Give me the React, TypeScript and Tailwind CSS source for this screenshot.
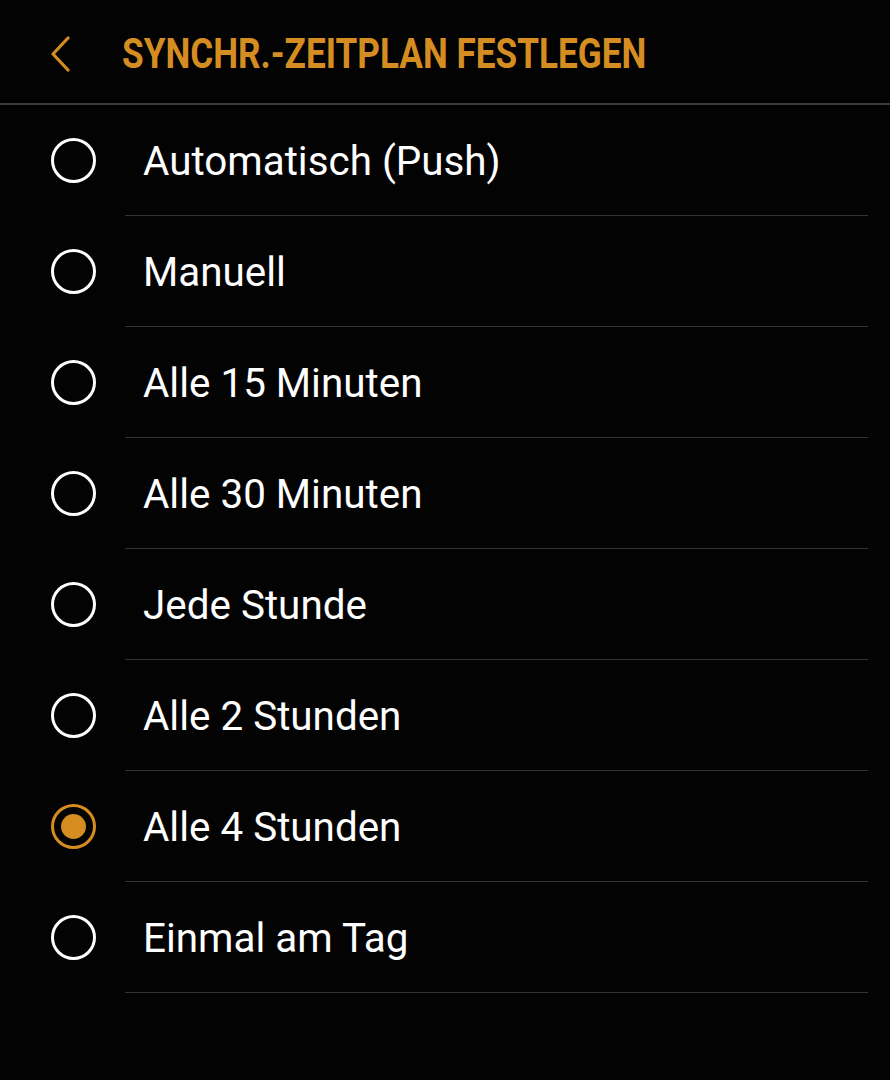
import React, { useState } from "react";

const options = [
  "Automatisch (Push)",
  "Manuell",
  "Alle 15 Minuten",
  "Alle 30 Minuten",
  "Jede Stunde",
  "Alle 2 Stunden",
  "Alle 4 Stunden",
  "Einmal am Tag",
];

const Radio: React.FC<{ checked: boolean }> = ({ checked }) => {
  return (
    <div
      className={`flex items-center justify-center w-[45px] h-[45px] rounded-full border-[3px] ${
        checked ? "border-[#d58d21]" : "border-white"
      }`}
    >
      {checked && <div className="w-[25px] h-[25px] rounded-full bg-[#d58d21]" />}
    </div>
  );
};

const App: React.FC = () => {
  const [selected, setSelected] = useState(6);

  return (
    <div
      className="w-[890px] h-[1080px] bg-[#030303] text-white"
      style={{ fontFamily: "Roboto, 'Noto Sans', sans-serif" }}
    >
      <div className="flex items-center h-[105px] pt-[4px] border-b-2 border-[#3a3a3a]">
        <button className="flex items-center justify-center w-[40px] ml-[40px] h-[60px]">
          <svg width="22" height="36" viewBox="0 0 22 36" fill="none">
            <path
              d="M19 2 L4 18 L19 34"
              stroke="#d58d21"
              strokeWidth="3.2"
              strokeLinecap="round"
              strokeLinejoin="round"
            />
          </svg>
        </button>
        <h1 className="ml-[42px] text-[42px] font-bold text-[#d58d21] whitespace-nowrap origin-left scale-x-[0.837] leading-none">
          SYNCHR.-ZEITPLAN FESTLEGEN
        </h1>
      </div>

      <div className="flex flex-col">
        {options.map((label, i) => (
          <div
            key={label}
            onClick={() => setSelected(i)}
            className="flex items-stretch h-[111px] cursor-pointer"
          >
            <div className="flex items-center w-[125px] shrink-0 pl-[51px]">
              <Radio checked={selected == i} />
            </div>
            <div className="flex items-center flex-1 mr-[22px] border-b border-[#333333] pl-[18px] pt-[4px]">
              <span className="text-[40.4px] leading-none">{label}</span>
            </div>
          </div>
        ))}
      </div>
    </div>
  );
};

export default App;
